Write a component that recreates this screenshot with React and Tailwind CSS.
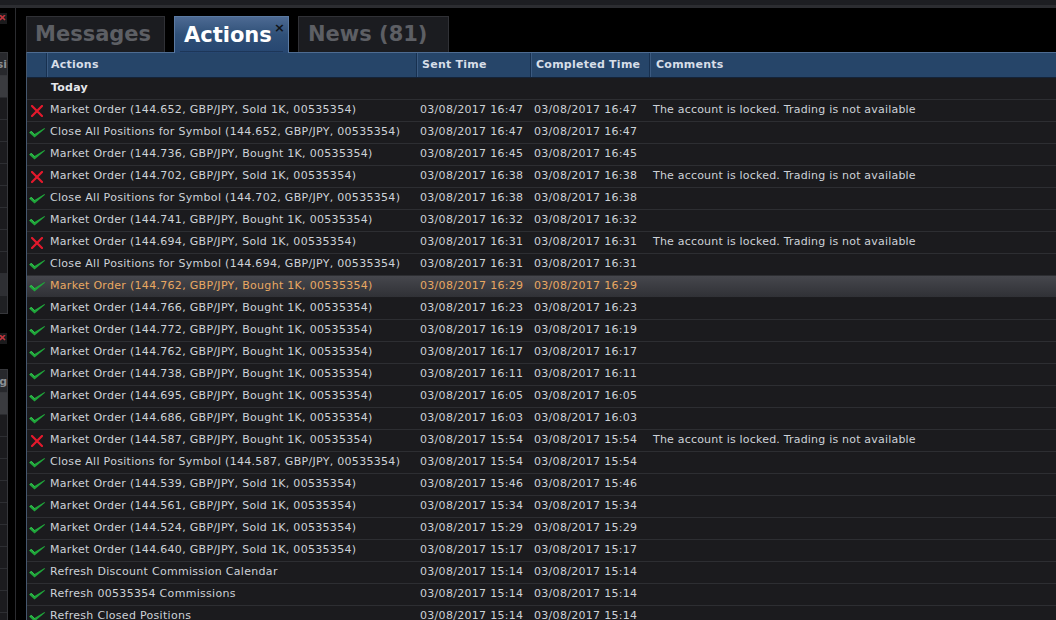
const rows = [
  { ok: false, action: 'Market Order (144.652, GBP/JPY, Sold 1K, 00535354)', sent: '16:47', done: '16:47', comment: 'The account is locked. Trading is not available' },
  { ok: true, action: 'Close All Positions for Symbol (144.652, GBP/JPY, 00535354)', sent: '16:47', done: '16:47' },
  { ok: true, action: 'Market Order (144.736, GBP/JPY, Bought 1K, 00535354)', sent: '16:45', done: '16:45' },
  { ok: false, action: 'Market Order (144.702, GBP/JPY, Sold 1K, 00535354)', sent: '16:38', done: '16:38', comment: 'The account is locked. Trading is not available' },
  { ok: true, action: 'Close All Positions for Symbol (144.702, GBP/JPY, 00535354)', sent: '16:38', done: '16:38' },
  { ok: true, action: 'Market Order (144.741, GBP/JPY, Bought 1K, 00535354)', sent: '16:32', done: '16:32' },
  { ok: false, action: 'Market Order (144.694, GBP/JPY, Sold 1K, 00535354)', sent: '16:31', done: '16:31', comment: 'The account is locked. Trading is not available' },
  { ok: true, action: 'Close All Positions for Symbol (144.694, GBP/JPY, 00535354)', sent: '16:31', done: '16:31' },
  { ok: true, active: true, action: 'Market Order (144.762, GBP/JPY, Bought 1K, 00535354)', sent: '16:29', done: '16:29' },
  { ok: true, action: 'Market Order (144.766, GBP/JPY, Bought 1K, 00535354)', sent: '16:23', done: '16:23' },
  { ok: true, action: 'Market Order (144.772, GBP/JPY, Bought 1K, 00535354)', sent: '16:19', done: '16:19' },
  { ok: true, action: 'Market Order (144.762, GBP/JPY, Bought 1K, 00535354)', sent: '16:17', done: '16:17' },
  { ok: true, action: 'Market Order (144.738, GBP/JPY, Bought 1K, 00535354)', sent: '16:11', done: '16:11' },
  { ok: true, action: 'Market Order (144.695, GBP/JPY, Bought 1K, 00535354)', sent: '16:05', done: '16:05' },
  { ok: true, action: 'Market Order (144.686, GBP/JPY, Bought 1K, 00535354)', sent: '16:03', done: '16:03' },
  { ok: false, action: 'Market Order (144.587, GBP/JPY, Bought 1K, 00535354)', sent: '15:54', done: '15:54', comment: 'The account is locked. Trading is not available' },
  { ok: true, action: 'Close All Positions for Symbol (144.587, GBP/JPY, 00535354)', sent: '15:54', done: '15:54' },
  { ok: true, action: 'Market Order (144.539, GBP/JPY, Sold 1K, 00535354)', sent: '15:46', done: '15:46' },
  { ok: true, action: 'Market Order (144.561, GBP/JPY, Sold 1K, 00535354)', sent: '15:34', done: '15:34' },
  { ok: true, action: 'Market Order (144.524, GBP/JPY, Sold 1K, 00535354)', sent: '15:29', done: '15:29' },
  { ok: true, action: 'Market Order (144.640, GBP/JPY, Sold 1K, 00535354)', sent: '15:17', done: '15:17' },
  { ok: true, action: 'Refresh Discount Commission Calendar', sent: '15:14', done: '15:14' },
  { ok: true, action: 'Refresh 00535354 Commissions', sent: '15:14', done: '15:14' },
  { ok: true, action: 'Refresh Closed Positions', sent: '15:14', done: '15:14' },
]

function CheckIcon() {
  return (
    <svg width="16" height="10" viewBox="0 0 16 10">
      <path d="M0 4.5 L2.5 3 L5.5 6 L15.5 0 L16 0.8 L5.5 9.5 Z" fill="#1fa53a" />
      <path d="M1 4.3 L2.5 3.6 L5.5 6.8" stroke="#3fd25a" strokeWidth="0.8" fill="none" />
    </svg>
  )
}

function CrossIcon() {
  return (
    <svg width="12" height="12" viewBox="0 0 12 12">
      <path d="M1 1 L11 11 M11 1 L1 11" stroke="#e3192c" strokeWidth="2.2" strokeLinecap="square" />
    </svg>
  )
}

function SmallCross() {
  return (
    <div className="w-[7px] h-[11px] bg-[#1b1b1d] flex items-center">
      <svg width="7" height="7" viewBox="0 0 7 7">
        <path d="M0 0 L5 5 M5 0 L0 5" stroke="#c0343c" strokeWidth="1.6" />
      </svg>
    </div>
  )
}

function SidePanel({ label, rowCount, footer }) {
  return (
    <div className="w-[8px] border-r border-[#36373b] overflow-hidden">
      <div className="h-[24px] bg-[#27282c] border-t border-b border-[#36373b] flex items-center justify-end text-[11px] font-bold text-[#8a8d92] leading-none">
        {label}
      </div>
      <div className="h-[22px] bg-[#3a3b3f] border-b border-[#2a2b2f]" />
      {Array.from({ length: rowCount }).map((_, i) => (
        <div key={i} className="h-[22px] bg-[#1b1b1e] border-b border-[#2d2e32]" />
      ))}
      {footer && (
        <>
          <div className="h-[22px] bg-[#2e2f33]" />
          <div className="h-[18px] bg-[#1f2023] border-b border-[#36373b]" />
        </>
      )}
    </div>
  )
}

function Sidebar() {
  return (
    <div className="w-[26px] flex shrink-0">
      <div className="w-[16px] border-r border-[#2b2c30] flex flex-col">
        <div className="mt-[5px]"><SmallCross /></div>
        <div className="mt-[28px]">
          <SidePanel label="si" rowCount={8} footer />
        </div>
        <div className="mt-[10px] h-px bg-[#2b2c30]" />
        <div className="mt-[9px]"><SmallCross /></div>
        <div className="mt-[25px]">
          <SidePanel label="g" rowCount={12} />
        </div>
      </div>
    </div>
  )
}

function Tabs() {
  return (
    <div className="mt-[8px] h-[36px] flex items-end gap-[9px] font-bold text-[21px] leading-none">
      <div className="w-[139px] h-[36px] bg-[#1b1c20] border border-b-0 border-[#303136] text-[#5d5f64] flex items-center pl-[8px]">
        Messages
      </div>
      <div className="relative w-[115px] h-[37px] -mb-px bg-gradient-to-b from-[#4d6a93] via-[#2f5078] to-[#264670] border border-b-0 border-[#5b7aa2] text-white flex items-center pl-[9px]">
        Actions
        <span className="absolute top-[4px] right-[3px] text-[13px] text-[#101418]">×</span>
        <div className="absolute bottom-[1px] left-[5px] right-[5px] h-px bg-[#1d3658]" />
      </div>
      <div className="w-[151px] h-[36px] bg-[#1b1c20] border border-b-0 border-[#303136] text-[#5d5f64] flex items-center pl-[9px]">
        News (81)
      </div>
    </div>
  )
}

function HeaderCell({ children, className }) {
  return (
    <div className={`h-full flex items-center border-l border-[#17304f] shadow-[inset_1px_0_0_#3b5a80] ${className}`}>
      {children}
    </div>
  )
}

function Grid() {
  return (
    <div className="flex-1 border-l border-[#46586f] flex flex-col min-h-0">
      <div className="h-[26px] bg-[#264569] border-t border-[#4e6c92] border-b border-b-[#142338] flex items-center text-[11px] font-bold tracking-[0.25px] text-[#d7dee8] shrink-0">
        <div className="w-[19px]" />
        <HeaderCell className="w-[370px] pl-[4px]">Actions</HeaderCell>
        <HeaderCell className="w-[114px] pl-[5px]">Sent Time</HeaderCell>
        <HeaderCell className="w-[119px] pl-[5px]">Completed Time</HeaderCell>
        <HeaderCell className="flex-1 pl-[6px]">Comments</HeaderCell>
      </div>
      <div className="h-[22px] shrink-0 bg-[#1b1b1e] border-b border-[#2d2e32] flex items-center pl-[24px] text-[11px] font-bold tracking-[0.25px] text-[#e4e6ea]">
        Today
      </div>
      {rows.map((r, i) => (
        <div
          key={i}
          className={`h-[22px] shrink-0 flex items-center border-b text-[11px] tracking-[0.3px] whitespace-nowrap ${
            r.active
              ? 'bg-gradient-to-b from-[#46474d] to-[#303136] border-[#1c1c1f] text-[#e9a862]'
              : 'bg-[#1b1b1e] border-[#2d2e32] text-[#cdd2d8]'
          }`}
        >
          <div className="w-[19px] flex justify-center items-center pl-[1px]">
            {r.ok ? <CheckIcon /> : <CrossIcon />}
          </div>
          <div className="w-[370px] pl-[4px]">{r.action}</div>
          <div className="w-[114px] pl-[4px]">03/08/2017 {r.sent}</div>
          <div className="w-[119px] pl-[4px]">03/08/2017 {r.done}</div>
          <div className="flex-1 pl-[4px] tracking-[0.2px]">{r.comment}</div>
        </div>
      ))}
    </div>
  )
}

export default function App() {
  return (
    <div className="w-[1056px] h-[620px] bg-black overflow-hidden flex flex-col font-['DejaVu_Sans',sans-serif]">
      <div className="h-[5px] bg-[#1d1e22] shrink-0" />
      <div className="h-[3px] bg-[#2c2d31] shrink-0" />
      <div className="flex flex-1 min-h-0">
        <Sidebar />
        <div className="flex-1 flex flex-col min-w-0">
          <Tabs />
          <Grid />
        </div>
      </div>
    </div>
  )
}
